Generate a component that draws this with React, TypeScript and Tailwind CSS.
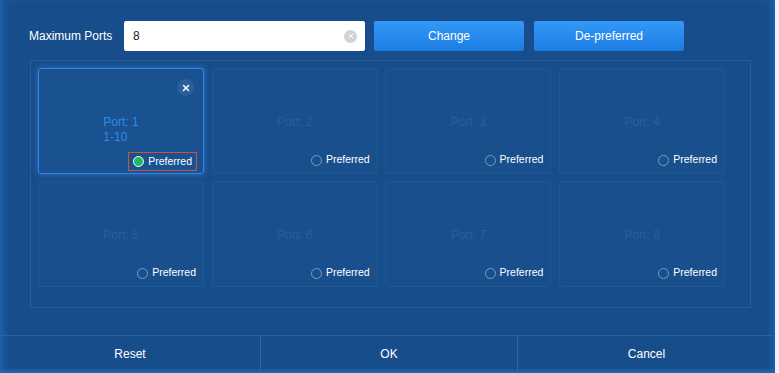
import { X } from 'lucide-react';

const ports = [1, 2, 3, 4, 5, 6, 7, 8];

function Radio({ checked }: { checked: boolean }) {
  return checked ? (
    <span className="w-[11px] h-[11px] rounded-full border-[1.5px] border-white bg-[#20b865] shrink-0" />
  ) : (
    <span className="w-[11px] h-[11px] rounded-full border border-[#7f9cc2] shrink-0" />
  );
}

function PortCard({ port }: { port: number }) {
  const active = port === 1;
  return (
    <div
      className={
        active
          ? 'relative h-[106px] rounded-[3px] border-[1.5px] border-[#3088e4] bg-[#1a5291] shadow-[0_0_6px_rgba(60,150,255,0.55)]'
          : 'relative h-[106px] rounded-[3px] border border-[#205894] bg-[#194f8d]'
      }
    >
      <div className="flex justify-center pt-[46px]">
        <div className={active ? 'text-[12px] leading-[15px] text-[#2f8be6]' : 'text-[12px] leading-[15px] text-[#2c5e98]'}>
          <div>Port: {port}</div>
          {active && <div>1-10</div>}
        </div>
      </div>
      {active && (
        <div className="absolute top-[10px] right-[9px] w-[17px] h-[17px] rounded-full bg-[#2a5f9e] flex items-center justify-center">
          <X className="w-[10px] h-[10px] text-white" strokeWidth={3.5} />
        </div>
      )}
      <div
        className={
          active
            ? 'absolute right-[6px] bottom-[2px] h-[19px] px-[4px] flex items-center gap-[4px] border-[1.5px] border-[#c9553a]'
            : 'absolute right-[7px] bottom-[5px] flex items-center gap-[4px]'
        }
      >
        <Radio checked={active} />
        <span className="text-[10.5px] text-white">Preferred</span>
      </div>
    </div>
  );
}

export default function App() {
  return (
    <div className="w-[779px] h-[373px] bg-[#eef2f7] font-['Liberation_Sans',Arial,sans-serif]">
      <div className="w-[775px] h-[373px] flex flex-col bg-[#184d8b] shadow-[inset_6px_0_8px_-4px_#2068b8,inset_0_-4px_4px_-2px_#2270c4,inset_-8px_0_8px_-6px_#2466b0]">
        {/* Header row */}
        <div className="flex items-center pt-[21px] pl-[29px]">
          <span className="w-[95px] text-[12px] text-white">Maximum Ports</span>
          <div className="w-[241px] h-[30px] bg-white rounded-[2px] flex items-center justify-between pl-[9px] pr-[8px]">
            <span className="text-[12px] text-[#222]">8</span>
            <span className="w-[13px] h-[13px] rounded-full bg-[#cfd3d8] flex items-center justify-center">
              <X className="w-[8px] h-[8px] text-white" strokeWidth={3} />
            </span>
          </div>
          <button className="ml-[9px] w-[150px] h-[30px] rounded-[2px] bg-gradient-to-b from-[#3299f6] to-[#1d7ce4] text-[12px] text-white">
            Change
          </button>
          <button className="ml-[10px] w-[150px] h-[30px] rounded-[2px] bg-gradient-to-b from-[#3299f6] to-[#1d7ce4] text-[12px] text-white">
            De-preferred
          </button>
        </div>

        {/* Ports grid */}
        <div className="mt-[9px] ml-[30px] w-[721px] h-[248px] border border-[#285c98] pt-[7px] pl-[7px]">
          <div className="grid grid-cols-[repeat(4,166px)] gap-x-[7.7px] gap-y-[7px]">
            {ports.map((p) => (
              <PortCard key={p} port={p} />
            ))}
          </div>
        </div>

        {/* Footer */}
        <div className="mt-[27px] h-[36px] flex border-t border-[#2a63a4] text-[12px] text-white">
          <button className="w-[261px] h-full border-r border-[#2c67a8]">Reset</button>
          <button className="w-[257px] h-full border-r border-[#2c67a8]">OK</button>
          <button className="flex-1 h-full">Cancel</button>
        </div>
      </div>
    </div>
  );
}
